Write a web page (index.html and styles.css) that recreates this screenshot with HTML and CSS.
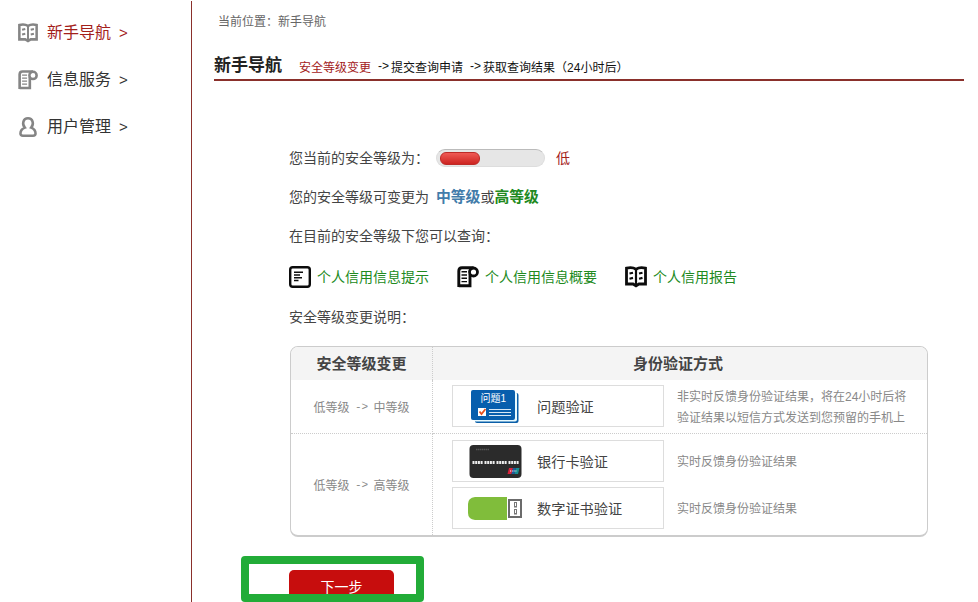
FILE: index.html
```html
<!DOCTYPE html>
<html lang="zh-CN">
<head>
    <meta charset="UTF-8">
    <meta name="viewport" content="width=device-width, initial-scale=1.0">
    <title>新手导航</title>
    <link rel="stylesheet" href="styles.css">
</head>
<body>

    <!-- shared icons -->
    <svg class="defs" width="0" height="0">
        <symbol id="icon-book" viewBox="0 0 22 22">
            <path d="M1.5 2.2C5 1.4 8.500 1.600 11 3.200C13.500 1.600 17 1.400 20.500 2.200V18H14L11 19.800L8 18H1.500Z" fill="none" stroke="currentColor" stroke-width="2.800"/>
            <path d="M11 3V20" stroke="currentColor" stroke-width="2.200"/>
            <path d="M4.500 7.500L8 6.700M4.500 12.700L8 11.900M14 7.500L17.500 6.700M14 12.700L17.500 11.900" stroke="currentColor" stroke-width="2.200"/>
        </symbol>
        <symbol id="icon-scroll" viewBox="0 0 22 22">
            <path d="M1.800 21V5Q1.800 1.700 5 1.700H16.500M1.800 19.800H13V8" fill="none" stroke="currentColor" stroke-width="2.900"/>
            <circle cx="16.500" cy="6" r="4" fill="none" stroke="currentColor" stroke-width="2.800"/>
            <path d="M4.500 5.700H10M4.500 9H10M4.500 12.300H10M4.500 15.600H10" stroke="currentColor" stroke-width="1.400"/>
        </symbol>
        <symbol id="icon-user" viewBox="0 0 22 22">
            <path d="M7.500 11.700C4 7.500 5.700 1.400 11 1.400S18 7.500 14.500 11.700C17.800 13 19.300 15.500 19.300 18.200Q19.300 20.600 16.500 20.600H5.500Q2.700 20.600 2.700 18.200C2.700 15.500 4.200 13 7.500 11.700Z" fill="none" stroke="currentColor" stroke-width="2.800"/>
        </symbol>
        <symbol id="icon-note" viewBox="0 0 22 22">
            <rect x="1.200" y="1.200" width="19.600" height="19.600" rx="2.500" fill="none" stroke="currentColor" stroke-width="2.400"/>
            <path d="M5 6.200H14M5 9H11M5 11.800H13M5 14.600H9.500" stroke="currentColor" stroke-width="1.500"/>
        </symbol>
    </svg>

    <div class="page">
        <div class="sidebar">
            <a class="nav-item active"><svg class="icon"><use href="#icon-book"/></svg><span class="name">新手导航</span><span class="more">&gt;</span></a>
            <a class="nav-item"><svg class="icon"><use href="#icon-scroll"/></svg><span class="name">信息服务</span><span class="more">&gt;</span></a>
            <a class="nav-item"><svg class="icon"><use href="#icon-user"/></svg><span class="name">用户管理</span><span class="more">&gt;</span></a>
        </div>

        <div class="main">
            <div class="location">当前位置：新手导航</div>
            <div class="title-bar">
                <h1>新手导航</h1>
                <span class="step current">安全等级变更</span>
                <span class="step-arrow">-&gt;</span>
                <span class="step">提交查询申请</span>
                <span class="step-arrow">-&gt;</span>
                <span class="step">获取查询结果（24小时后）</span>
            </div>

            <div class="content">
                <div class="line">
                    <span class="label">您当前的安全等级为：</span>
                    <div class="meter"><div class="meter-fill"></div></div>
                    <span class="low">低</span>
                </div>
                <div class="line">
                    <span class="label">您的安全等级可变更为</span>
                    <b class="middle">中等级</b>或<b class="high">高等级</b>
                </div>
                <div class="line">在目前的安全等级下您可以查询：</div>
                <div class="links">
                    <a><svg class="icon"><use href="#icon-note"/></svg><span>个人信用信息提示</span></a>
                    <a><svg class="icon"><use href="#icon-scroll"/></svg><span>个人信用信息概要</span></a>
                    <a><svg class="icon"><use href="#icon-book"/></svg><span>个人信用报告</span></a>
                </div>
                <div class="line explain">安全等级变更说明：</div>

                <div class="levels">
                    <div class="cell head">安全等级变更</div>
                    <div class="cell head methods-head">身份验证方式</div>

                    <div class="cell level">低等级<span class="arrow">-&gt;</span>中等级</div>
                    <div class="cell methods">
                        <div class="method">
                            <div class="method-box">
                                <svg class="pic" width="56" height="36" viewBox="0 0 56 36">
                                    <rect x="7" y="5" width="43.500" height="30" rx="2" fill="#0b5fa8"/>
                                    <rect x="6" y="4" width="43" height="29.500" rx="2" fill="#e9fbff"/>
                                    <rect x="3" y="2" width="44" height="30" rx="2" fill="#075ead"/>
                                    <text class="pic-text" x="12.500" y="14">问题1</text>
                                    <rect x="10" y="20" width="8" height="8" fill="#fff"/>
                                    <path d="M11.500 23.500L13.500 26L17.500 21" fill="none" stroke="#e8501e" stroke-width="1.800"/>
                                    <path d="M21 21.500H43M21 24.500H43M21 27.500H43" stroke="#d9e8f5"/>
                                </svg>
                                <span>问题验证</span>
                            </div>
                            <p>非实时反馈身份验证结果，将在24小时后将<br>验证结果以短信方式发送到您预留的手机上</p>
                        </div>
                    </div>

                    <div class="cell level">低等级<span class="arrow">-&gt;</span>高等级</div>
                    <div class="cell methods">
                        <div class="method">
                            <div class="method-box">
                                <svg class="pic" width="56" height="36" viewBox="0 0 56 36">
                                    <rect x="1.500" y="2" width="52" height="33" rx="4" fill="#2b2b2b"/>
                                    <path d="M8 6.500H21" stroke="#555" stroke-width="1.500" stroke-dasharray="1.500 .5"/>
                                    <path d="M4.500 19.500H15M16.500 19.500H27M28.500 19.500H39M40.500 19.500H51" stroke="#eee" stroke-width="3" stroke-dasharray="2 .7"/>
                                    <path d="M41 25H45L43.500 31H39.500Z" fill="#d8233c"/>
                                    <path d="M45 25H48L46.500 31H43.500Z" fill="#1d5a9c"/>
                                    <path d="M48 25H51.500L50 31H46.500Z" fill="#168c91"/>
                                    <path d="M42 28H49" stroke="#fff" stroke-width="1.200" stroke-dasharray="1 .8"/>
                                </svg>
                                <span>银行卡验证</span>
                            </div>
                            <p>实时反馈身份验证结果</p>
                        </div>
                        <div class="method">
                            <div class="method-box">
                                <svg class="pic" width="56" height="36" viewBox="0 0 56 36">
                                    <path d="M39 7V30H7Q0 29 0 23V14Q0 8 7 7Z" fill="#80bd3b"/>
                                    <rect x="41" y="10" width="12" height="17" fill="#fff" stroke="#6b6b6b" stroke-width="2"/>
                                    <rect x="46.500" y="12.500" width="2" height="4.500" fill="none" stroke="#777"/>
                                    <rect x="46.500" y="19.500" width="2" height="4.500" fill="none" stroke="#777"/>
                                </svg>
                                <span>数字证书验证</span>
                            </div>
                            <p>实时反馈身份验证结果</p>
                        </div>
                    </div>
                </div>
            </div>

            <div class="highlight">
                <button class="next">下一步</button>
            </div>
        </div>
    </div>

</body>
</html>
```

FILE: styles.css
```css
* {
    box-sizing: border-box;
}

body {
    margin: 0;
    background-color: #fff;
    color: #444;
    font-family: "Liberation Sans", "Noto Sans CJK SC", sans-serif;
    font-size: 14px;
    overflow: hidden;
}

.defs {
    display: none;
}

.page {
    display: flex;
    height: 602px;
    padding-top: 1px;
}

.icon {
    width: 22px;
    height: 22px;
    flex: none;
}

.sidebar {
    width: 192px;
    flex: none;
    padding: 8px 0 0 18px;
    border-right: 1px solid #8a302b;
}

.nav-item {
    display: flex;
    align-items: center;
    height: 47px;
    font-size: 16px;
    color: #333;
}

.nav-item .icon {
    width: 20px;
    height: 22px;
    margin-right: 9px;
    color: #858585;
}

.nav-item .name {
    padding-bottom: 4px;
}

.nav-item .more {
    margin-left: 8px;
    font-size: 15px;
}

.nav-item.active {
    color: #a3201a;
}

.main {
    flex: 1;
    padding: 0 14px 0 22px;
}

.location {
    height: 40px;
    padding-left: 4px;
    line-height: 42px;
    font-size: 12px;
    color: #666;
}

.title-bar {
    display: flex;
    align-items: center;
    height: 40px;
    padding-top: 12px;
    border-bottom: 2px solid #8a302b;
    font-size: 12px;
    color: #111;
    white-space: nowrap;
}

.title-bar h1 {
    margin: 0 17px 0 0;
    font-size: 17px;
    line-height: 24px;
    color: #222;
}

.step.current {
    color: #a3201a;
}

.step-arrow {
    width: 20px;
    padding-left: 7px;
}

.content {
    padding: 56px 0 0 75px;
}

.line {
    display: flex;
    align-items: center;
    height: 39px;
}

.label {
    width: 147px;
}

.meter {
    width: 109px;
    height: 18px;
    margin-top: 2px;
    padding: 2px 3px;
    border: 1px solid #ddd;
    border-top: 1px solid #bbb;
    border-radius: 9px;
    background-color: #e6e6e6;
}

.meter-fill {
    width: 40px;
    height: 13px;
    border: 1px solid #bd2b28;
    border-radius: 6px;
    background: linear-gradient(#ef5a55, #cd2421);
}

.low {
    margin-left: 11px;
    color: #a3201a;
}

.middle,
.high {
    font-size: 14.800px;
}

.middle {
    color: #427caa;
}

.high {
    color: #218a21;
}

.links {
    display: flex;
    gap: 28px;
    height: 44px;
    color: #218a21;
}

.links a {
    display: flex;
    align-items: center;
    gap: 6px;
}

.links .icon {
    margin-top: 2px;
    color: #0c0c0c;
}

.explain {
    height: 36px;
}

.levels {
    display: grid;
    grid-template-columns: 142px 1fr;
    grid-template-rows: 33px 54px 1fr;
    width: 638px;
    height: 191px;
    margin: 12px 0 0 1px;
    border: 1px solid #ccc;
    border-bottom-width: 2px;
    border-radius: 8px;
    overflow: hidden;
}

.cell {
    border-bottom: 1px dotted #ccc;
}

.cell:nth-child(odd) {
    border-right: 1px dotted #ccc;
}

.cell:nth-child(n + 5) {
    border-bottom: none;
}

.head {
    display: flex;
    align-items: center;
    justify-content: center;
    padding-bottom: 2px;
    border-bottom: none;
    background-color: #f4f4f4;
    font-size: 15px;
    font-weight: bold;
}

.methods-head {
    padding-right: 4px;
}

.level {
    display: flex;
    align-items: center;
    justify-content: center;
    font-size: 12px;
    color: #888;
}

.arrow {
    width: 24px;
    text-align: center;
    font-family: "Liberation Mono", monospace;
    font-size: 11px;
}

.methods {
    display: flex;
    flex-direction: column;
    gap: 5px;
    padding: 5px 0 0 19px;
}

.cell.methods:last-child {
    padding-top: 6px;
}

.method {
    display: flex;
    align-items: center;
    height: 42px;
}

.method-box {
    display: flex;
    align-items: center;
    width: 212px;
    height: 42px;
    padding-left: 15px;
    border: 1px solid #ddd;
    font-size: 14.200px;
}

.pic {
    margin-right: 13px;
}

.pic-text {
    font-size: 10px;
    fill: #fff;
}

.method p {
    margin: 3px 0 0 13px;
    font-size: 12px;
    line-height: 21px;
    color: #888;
}

/* green frame around the button, cut by the bottom of the page */
.highlight {
    width: 183px;
    height: 46px;
    margin: 19px 0 0 27px;
    padding: 6px 0 0 40px;
    border: 8px solid #22ac38;
    border-radius: 4px;
    overflow: hidden;
}

.next {
    display: block;
    width: 105px;
    height: 32px;
    padding: 0;
    border: none;
    border-radius: 5px 5px 0 0;
    background-color: #c70d0d;
    color: #fff;
    font-family: inherit;
    font-size: 14px;
}
```
